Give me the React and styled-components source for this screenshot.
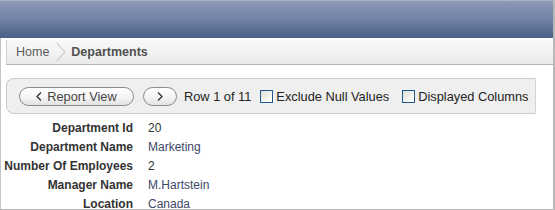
import styled, { createGlobalStyle } from 'styled-components'

const GlobalStyle = createGlobalStyle`
	html, body {
		margin: 0;
		padding: 0;
		background: #ffffff;
	}
	body {
		font-family: "Liberation Sans", Arial, sans-serif;
	}
`

const Frame = styled.div`
	width: 553px;
	height: 209px;
	border-right: 2px solid #b8b8b8;
	border-bottom: 1px solid #b8b8b8;
	overflow: hidden;
	display: flex;
	flex-direction: column;
`

const Header = styled.div`
	height: 37px;
	border-top: 1px solid #aab3c8;
	background: linear-gradient(to bottom, #8b98b6 0%, #7485a8 45%, #56698f 85%, #4d6088 100%);
	flex-shrink: 0;
`

const Body = styled.div`
	flex: 1;
	border-left: 1px solid #c4c4c4;
	padding-top: 2px;
	display: flex;
	flex-direction: column;
`

const Crumbs = styled.div`
	margin-left: 5px;
	height: 24px;
	border-left: 1px solid #d0d0d0;
	border-bottom: 1px solid #b4b4b4;
	background: linear-gradient(to bottom, #f8f8f8 0%, #f3f3f3 50%, #e9e9e9 100%);
	display: flex;
	align-items: center;
	padding-left: 9px;
	font-size: 12.5px;
	color: #555555;
`

const Crumb = styled.span`
	font-weight: ${p => (p.$current ? 'bold' : 'normal')};
	color: ${p => (p.$current ? '#505050' : '#5a5a5a')};
`

const Sep = styled.svg`
	width: 10px;
	height: 24px;
	margin: 0 5px 0 7px;
	flex-shrink: 0;
`

const Toolbar = styled.div`
	margin: 13px 0 0 5px;
	width: 530px;
	height: 36px;
	border: 1px solid #cccccc;
	border-right-color: #d4d4d4;
	border-radius: 8px 0 0 8px;
	background: #efefef;
	display: flex;
	align-items: center;
	padding-left: 12px;
	box-sizing: border-box;
	font-size: 12.8px;
	color: #222222;
`

const PillButton = styled.button`
	height: 19px;
	width: ${p => p.$width}px;
	margin-right: ${p => p.$gap}px;
	border: 1px solid #8a8a8a;
	border-radius: 10px;
	background: linear-gradient(to bottom, #ffffff 0%, #f6f6f6 50%, #e2e2e2 100%);
	font-family: "Liberation Sans", Arial, sans-serif;
	font-size: 12.8px;
	color: #444444;
	display: flex;
	align-items: center;
	justify-content: center;
	gap: 5px;
	padding: 0;
	cursor: pointer;
`

const Chevron = styled.svg`
	width: 6px;
	height: 9px;
`

const Label = styled.label`
	display: flex;
	align-items: center;
	margin-right: ${p => p.$gap || 0}px;
	white-space: nowrap;
`

const Box = styled.span`
	width: 11px;
	height: 11px;
	border: 1px solid #1f5a8e;
	background: linear-gradient(135deg, #dcdcd4 0%, #f4f4f0 60%, #ffffff 100%);
	margin-right: 3px;
	flex-shrink: 0;
`

const Details = styled.div`
	display: grid;
	grid-template-columns: 132px auto;
	column-gap: 15px;
	margin-top: 5px;
	font-size: 12px;
`

const Key = styled.div`
	text-align: right;
	font-weight: bold;
	color: #333333;
	height: 19px;
	line-height: 19px;
	white-space: nowrap;
`

const Value = styled.div`
	color: ${p => (p.$num ? '#333333' : '#3d4866')};
	height: 19px;
	line-height: 19px;
	white-space: nowrap;
`

const rows = [
	['Department Id', '20', true],
	['Department Name', 'Marketing'],
	['Number Of Employees', '2', true],
	['Manager Name', 'M.Hartstein'],
	['Location', 'Canada']
]

const App = () => (
	<>
		<GlobalStyle />
		<Frame>
			<Header />
			<Body>
				<Crumbs>
					<Crumb>Home</Crumb>
					<Sep viewBox="0 0 10 24">
						<path d="M1 3 L9 12 L1 21" fill="none" stroke="#d0d0d0" strokeWidth="1.2" />
					</Sep>
					<Crumb $current>Departments</Crumb>
				</Crumbs>
				<Toolbar>
					<PillButton $width={115} $gap={9}>
						<Chevron viewBox="0 0 6 9">
							<path d="M5 0.5 L1 4.5 L5 8.5" fill="none" stroke="#333" strokeWidth="1.3" />
						</Chevron>
						Report View
					</PillButton>
					<PillButton $width={34} $gap={7}>
						<Chevron viewBox="0 0 6 9">
							<path d="M1 0.5 L5 4.5 L1 8.5" fill="none" stroke="#333" strokeWidth="1.3" />
						</Chevron>
					</PillButton>
					<Label $gap={9}>Row 1 of 11</Label>
					<Label $gap={13}>
						<Box />
						Exclude Null Values
					</Label>
					<Label>
						<Box />
						Displayed Columns
					</Label>
				</Toolbar>
				<Details>
					{rows.map(([k, v, num], i) => [
						<Key key={'k' + i}>{k}</Key>,
						<Value key={'v' + i} $num={num}>{v}</Value>
					])}
				</Details>
			</Body>
		</Frame>
	</>
)

export default App
